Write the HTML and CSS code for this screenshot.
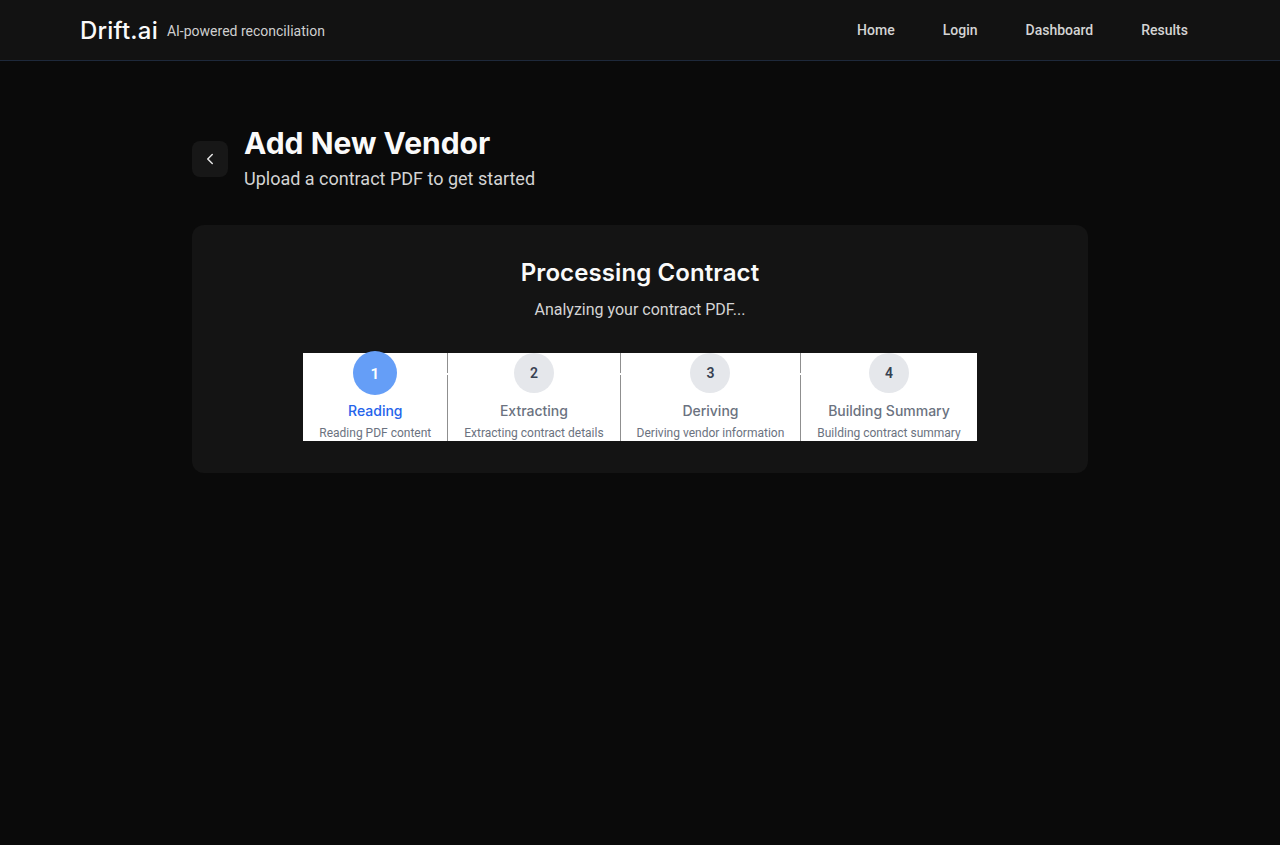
FILE: index.html
```html
<!DOCTYPE html>
<html lang="en">
<head>
<meta charset="utf-8">
<title>Drift.ai — Add New Vendor</title>
<link rel="stylesheet" href="styles.css">
</head>
<body>
<header class="nav">
  <div class="nav-inner">
    <div class="brand">
      <span class="logo">Drift.ai</span>
      <span class="tagline">AI-powered reconciliation</span>
    </div>
    <nav class="links">
      <a href="#">Home</a>
      <a href="#">Login</a>
      <a href="#">Dashboard</a>
      <a href="#">Results</a>
    </nav>
  </div>
</header>
<main class="main">
  <div class="container">
    <div class="page-head">
      <button class="back" aria-label="Back">
        <svg width="18" height="18" viewBox="0 0 24 24" fill="none" stroke="currentColor" stroke-width="2" stroke-linecap="round" stroke-linejoin="round"><path d="M15 18l-6-6 6-6"/></svg>
      </button>
      <div>
        <h1 class="title">Add New Vendor</h1>
        <p class="subtitle">Upload a contract PDF to get started</p>
      </div>
    </div>
    <section class="card">
      <h2 class="card-title">Processing Contract</h2>
      <p class="card-sub">Analyzing your contract PDF...</p>
      <div class="stepper">
        <div class="step active">
          <div class="circle">1</div>
          <div class="step-name">Reading</div>
          <div class="step-desc">Reading PDF content</div>
        </div>
        <div class="step">
          <div class="circle">2</div>
          <div class="step-name">Extracting</div>
          <div class="step-desc">Extracting contract details</div>
        </div>
        <div class="step">
          <div class="circle">3</div>
          <div class="step-name">Deriving</div>
          <div class="step-desc">Deriving vendor information</div>
        </div>
        <div class="step">
          <div class="circle">4</div>
          <div class="step-name">Building Summary</div>
          <div class="step-desc">Building contract summary</div>
        </div>
      </div>
    </section>
  </div>
</main>
</body>
</html>
```

FILE: styles.css
```css
* { box-sizing: border-box; }
html, body { margin: 0; padding: 0; }
body {
  background: #0a0a0a;
  font-family: Roboto, "Noto Sans", sans-serif;
  color: #fff;
  min-height: 845px;
}
.nav {
  background: #121212;
  border-bottom: 1px solid #1e293b;
  height: 61px;
}
.nav-inner {
  height: 60px;
  padding: 0 80px;
  display: flex;
  align-items: center;
  justify-content: space-between;
}
.brand { display: flex; align-items: center; gap: 9px; }
.logo { font-family: Inter, Roboto, sans-serif; font-size: 24px; font-weight: 500; color: #fafafa; letter-spacing: 0.2px; }
.tagline { font-size: 14px; color: #cfcfcf; padding-top: 1px; }
.links { display: flex; gap: 24px; }
.links a {
  color: #d4d4d4;
  text-decoration: none;
  font-size: 14px;
  font-weight: 500;
  padding: 8px 12px;
}
.main { padding-top: 64px; }
.container { width: 896px; margin: 0 auto; }
.page-head { display: flex; align-items: center; gap: 16px; }
.back {
  width: 36px; height: 36px;
  border: 0; border-radius: 8px;
  background: #171717;
  color: #e5e5e5;
  display: flex; align-items: center; justify-content: center;
  padding: 0;
}
.title { margin: 0; font-family: Inter, Roboto, sans-serif; font-size: 30px; line-height: 36px; font-weight: 700; color: #fafafa; }
.subtitle { margin: 4px 0 0; font-size: 18px; line-height: 28px; color: #d4d4d4; }
.card {
  margin-top: 32px;
  background: #141414;
  border-radius: 12px;
  padding: 32px;
  display: flex; flex-direction: column; align-items: center;
}
.card-title { margin: 0; font-family: Inter, Roboto, sans-serif; font-size: 24px; line-height: 32px; font-weight: 600; color: #fafafa; letter-spacing: 0.1px; }
.card-sub { margin: 9px 0 0; font-size: 16px; line-height: 24px; color: #d4d4d4; }
.stepper {
  margin-top: 31px;
  display: flex;
  background: #fff;
}
.step {
  position: relative;
  display: flex; flex-direction: column; align-items: center;
  padding: 0 16px;
}
.step + .step { border-left: 1px solid #8f8f8f; }
.step + .step::before {
  content: "";
  position: absolute;
  left: -1px; top: 20px;
  width: 1px; height: 2px;
  background: #fff;
}
.circle {
  width: 40px; height: 40px;
  border-radius: 50%;
  background: #e5e7eb;
  color: #374151;
  font-size: 14px; font-weight: 600;
  display: flex; align-items: center; justify-content: center;
}
.step.active .circle {
  background: #659ef7;
  color: #fff;
  transform: scale(1.1);
}
.step-name {
  margin-top: 8px;
  font-family: Inter, Roboto, sans-serif;
  font-size: 14px; line-height: 20px; font-weight: 500;
  color: #6b7280;
  white-space: nowrap;
}
.step.active .step-name { color: #2563eb; }
.step-desc {
  margin-top: 4px;
  font-size: 12px; line-height: 16px;
  color: #6b7280;
  white-space: nowrap;
}
```
